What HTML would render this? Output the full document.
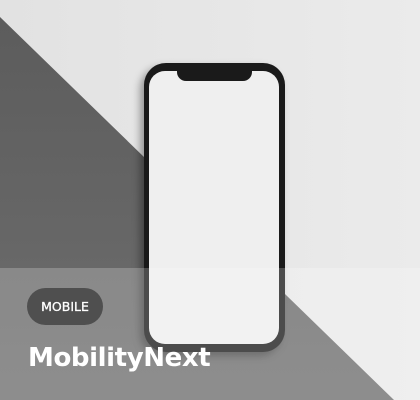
<!DOCTYPE html>
<html><head><style>
html,body{margin:0;padding:0}
body{width:420px;height:400px;position:relative;overflow:hidden;background:#e4e4e4;font-family:"DejaVu Sans","Liberation Sans",sans-serif}
.bg{position:absolute;inset:0}
.phone{position:absolute;left:144px;top:63px;width:141px;height:289px;background:#1a1a1a;border-radius:22px;box-shadow:-4px 4px 8px rgba(0,0,0,.35)}
.screen{position:absolute;left:5px;top:8px;width:130px;height:273px;background:#efefef;border-radius:16px}
.notch{position:absolute;left:33px;top:7px;width:75px;height:11px;background:#1a1a1a;border-radius:0 0 9px 9px}
.overlay{position:absolute;left:0;top:268px;width:420px;height:132px;background:rgba(255,255,255,.22)}
.badge{position:absolute;left:27px;top:288px;width:76px;height:37px;border-radius:19px;background:#4f4f4f;color:#fff;font-size:12.5px;line-height:37px;text-align:center;-webkit-text-stroke:0.3px #fff}
.title{position:absolute;left:28px;top:341px;color:#fff;font-weight:bold;font-size:26px;line-height:34px;letter-spacing:-0.4px}
</style></head><body>
<svg class="bg" width="420" height="400"><defs><linearGradient id="g" x1="0" y1="0" x2="0" y2="1"><stop offset="0" stop-color="#5c5c5c"/><stop offset="1" stop-color="#6e6e6e"/></linearGradient><linearGradient id="l" x1="0" y1="0" x2="1" y2="0"><stop offset="0" stop-color="#e2e2e2"/><stop offset="1" stop-color="#ebebeb"/></linearGradient></defs>
<rect width="420" height="400" fill="url(#l)"/>
<polygon points="0,17 394,400 0,400" fill="url(#g)"/></svg>
<div class="phone"><div class="screen"></div><div class="notch"></div></div>
<div class="overlay"></div>
<div class="badge">MOBILE</div>
<div class="title">MobilityNext</div>
</body></html>
